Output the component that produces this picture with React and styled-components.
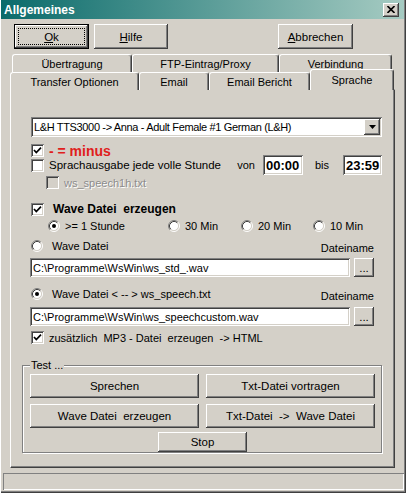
import React from "react";
import styled, { createGlobalStyle, css } from "styled-components";

const GlobalStyle = createGlobalStyle`
  html, body {
    margin: 0;
    padding: 0;
    background: #d4d0c8;
  }
  body {
    font-family: "Liberation Sans", Arial, sans-serif;
    font-size: 11px;
    color: #000;
  }
`;

//bevels
const raised = css`
  box-shadow: inset -1px -1px #404040, inset 1px 1px #fff, inset -2px -2px #808080, inset 2px 2px #d4d0c8;
`;
const sunken = css`
  box-shadow: inset 1px 1px #808080, inset -1px -1px #fff, inset 2px 2px #404040, inset -2px -2px #d4d0c8;
`;

const Window = styled.div`
  width: 406px;
  height: 493px;
  box-sizing: border-box;
  background: #d4d0c8;
  display: flex;
  flex-direction: column;
  overflow: hidden;
  box-shadow: inset 1px 0 #fff, inset -1px -1px #404040, inset -2px -2px #808080;
`;

const TitleBar = styled.div`
  height: 19px;
  margin: 0 2px 0 1px;
  padding: 0 5px 0 3px;
  background: linear-gradient(to right, #0a6b6b, #a6cbc2);
  display: flex;
  align-items: center;
  justify-content: space-between;
`;

const Title = styled.span`
  color: #fff;
  font-weight: bold;
  font-size: 12px;
`;

const CloseBox = styled.div`
  width: 16px;
  height: 14px;
  background: #d4d0c8;
  ${raised};
  display: flex;
  align-items: center;
  justify-content: center;
`;

const ButtonRow = styled.div`
  display: flex;
  margin-top: 5px;
  padding-left: 14px;
  height: 25px;
`;

const Button = styled.button`
  flex: none;
  width: ${p => p.$w}px;
  height: ${p => p.$h || 25}px;
  margin-left: ${p => p.$ml || 0}px;
  padding: 0;
  border: none;
  background: #d4d0c8;
  font: inherit;
  font-size: 11.5px;
  color: #000;
  white-space: pre;
  ${raised};
  ${p => p.$default && css`
    box-shadow: inset 0 0 0 1px #000, inset -2px -2px #404040, inset 2px 2px #fff, inset -3px -3px #808080;
    outline: 1px dotted #000;
    outline-offset: -5px;
  `}
  u {
    text-decoration: underline;
  }
`;

const TabRow = styled.div`
  display: flex;
  align-items: flex-start;
  height: ${p => p.$h}px;
  margin-top: ${p => p.$mt || 0}px;
  margin-left: ${p => p.$ml}px;
`;

const Tab = styled.div`
  flex: none;
  box-sizing: border-box;
  width: ${p => p.$w}px;
  height: ${p => (p.$active ? 21 : 18)}px;
  margin-top: ${p => (p.$active ? -3 : 0)}px;
  padding-top: ${p => (p.$active ? 0 : 1)}px;
  position: relative;
  z-index: ${p => (p.$active ? 2 : 0)};
  background: #d4d0c8;
  border-top: 1px solid #fff;
  border-left: 1px solid #fff;
  border-right: 1px solid #404040;
  border-top-left-radius: 3px;
  border-top-right-radius: 3px;
  box-shadow: inset -1px 0 #808080;
  display: flex;
  align-items: center;
  justify-content: center;
  font-size: 11px;
`;

const Panel = styled.div`
  margin-left: 10px;
  width: 385px;
  height: 379px;
  box-sizing: border-box;
  border-top: 1px solid #fff;
  border-left: 1px solid #fff;
  border-right: 1px solid #404040;
  border-bottom: 1px solid #404040;
  box-shadow: inset -1px -1px #808080;
  display: flex;
  flex-direction: column;
`;

const Combo = styled.div`
  margin: 27px 0 0 20px;
  width: 351px;
  height: 20px;
  box-sizing: border-box;
  padding: 2px;
  background: #fff;
  ${sunken};
  display: flex;
  align-items: center;
`;

const ComboText = styled.span`
  flex: 1;
  padding-left: 1px;
  white-space: nowrap;
  letter-spacing: -0.35px;
`;

const DropButton = styled.span`
  width: 16px;
  height: 16px;
  background: #d4d0c8;
  ${raised};
  display: flex;
  align-items: center;
  justify-content: center;
`;

const OptionRow = styled.div`
  display: flex;
  align-items: center;
  gap: ${p => p.$gap || 5}px;
  height: ${p => p.$h || 13}px;
  margin-top: ${p => p.$mt}px;
  margin-left: ${p => p.$ml}px;
  white-space: pre;
`;

const MinusLabel = styled.span`
  color: #e0201c;
  font-weight: bold;
  font-size: 14px;
`;

const BoldLabel = styled.span`
  font-weight: bold;
  font-size: 12px;
`;

const Disabled = styled.span`
  color: #8c8c8c;
  text-shadow: 1px 1px #fff;
`;

const TimeRow = styled.div`
  display: flex;
  align-items: center;
  height: 20px;
  width: 351px;
  margin: -2px 0 0 20px;
  white-space: nowrap;
`;

const TimeLabel = styled.span`
  flex: none;
  margin-left: ${p => p.$ml};
  margin-right: ${p => p.$mr}px;
  font-size: ${p => p.$size || 11}px;
`;

const Field = styled.div`
  flex: none;
  box-sizing: border-box;
  width: ${p => p.$w}px;
  height: ${p => p.$h}px;
  padding-left: 3px;
  background: #fff;
  ${sunken};
  display: flex;
  align-items: center;
  white-space: nowrap;
  overflow: hidden;
  font-size: ${p => (p.$bold ? 13 : 11)}px;
  font-weight: ${p => (p.$bold ? "bold" : "normal")};
`;

const RadioGrid = styled.div`
  display: grid;
  grid-template-columns: 120px 73px 72px auto;
  height: 13px;
  margin: 3px 0 0 37px;
`;

const FileHeader = styled.div`
  display: flex;
  justify-content: space-between;
  width: 343px;
  height: 16px;
  margin: ${p => p.$mt}px 0 0 20px;
`;

const RadioLabel = styled.span`
  align-self: flex-start;
  display: flex;
  align-items: center;
  gap: 9px;
  height: 13px;
  white-space: pre;
`;

const FileName = styled.span`
  align-self: flex-end;
  line-height: 13px;
`;

const FileRow = styled.div`
  display: flex;
  gap: 4px;
  margin: ${p => p.$mt}px 0 0 19px;
`;

const Group = styled.fieldset`
  margin: 15px 0 0 11px;
  width: 360px;
  height: 94px;
  box-sizing: border-box;
  padding: 3px 7px 0 7px;
  border: 1px solid #808080;
  box-shadow: inset 1px 1px #fff, 1px 1px #fff;
  min-inline-size: 0;
`;

const Legend = styled.legend`
  padding: 0 1px;
  line-height: 12px;
  background: #d4d0c8;
`;

const TestGrid = styled.div`
  display: grid;
  grid-template-columns: 169px 169px;
  grid-auto-rows: 24px;
  column-gap: 7px;
  row-gap: 6px;
  button {
    width: 100%;
    height: 100%;
  }
`;

const StopWrap = styled.div`
  display: flex;
  justify-content: center;
  margin-top: 4px;
  padding-left: 1px;
`;

const StatusBar = styled.div`
  margin: 5px 0 0 3px;
  width: 401px;
  height: 17px;
  box-shadow: inset 1px 1px #808080, inset -1px -1px #fff;
`;

const CheckBox = styled.span`
  flex: none;
  width: 13px;
  height: 13px;
  box-sizing: border-box;
  background: ${p => (p.$disabled ? "#d4d0c8" : "#fff")};
  ${sunken};
  display: flex;
  align-items: center;
  justify-content: center;
`;

const Check = ({ checked, disabled }) => (
  <CheckBox $disabled={disabled}>
    {checked && (
      <svg width="9" height="9" viewBox="0 0 9 9">
        <path d="M1 4 L3.3 6.6 L8 1.6" fill="none" stroke="#000" strokeWidth="1.7" />
      </svg>
    )}
  </CheckBox>
);

const Radio = ({ checked }) => (
  <svg width="12" height="12" viewBox="0 0 12 12" style={{ flex: "none" }}>
    <circle cx="6" cy="6" r="4.5" fill="#fff" />
    <path d="M2.11 9.89 A5.5 5.5 0 0 1 9.89 2.11" fill="none" stroke="#808080" />
    <path d="M9.89 2.11 A5.5 5.5 0 0 1 2.11 9.89" fill="none" stroke="#fff" />
    <path d="M2.82 9.18 A4.5 4.5 0 0 1 9.18 2.82" fill="none" stroke="#404040" />
    <path d="M9.18 2.82 A4.5 4.5 0 0 1 2.82 9.18" fill="none" stroke="#d4d0c8" />
    {checked && <circle cx="6" cy="6" r="2" fill="#000" />}
  </svg>
);

const RadioOption = ({ checked, children }) => (
  <OptionRow $mt={0} $ml={0} $gap={5}>
    <Radio checked={checked} />
    {children}
  </OptionRow>
);

const topTabs = [
  { label: "Übertragung", w: 120 },
  { label: "FTP-Eintrag/Proxy", w: 147 },
  { label: "Verbindung", w: 113 },
];

const bottomTabs = [
  { label: "Transfer Optionen", w: 129 },
  { label: "Email", w: 70 },
  { label: "Email Bericht", w: 101 },
  { label: "Sprache", w: 84, active: true },
];

const App = () => {
  return (
    <>
      <GlobalStyle />
      <Window>
        <TitleBar>
          <Title>Allgemeines</Title>
          <CloseBox>
            <svg width="8" height="7" viewBox="0 0 8 7">
              <path d="M0.5 0 L7.5 7 M7.5 0 L0.5 7" stroke="#000" strokeWidth="1.6" />
            </svg>
          </CloseBox>
        </TitleBar>

        <ButtonRow>
          <Button $w={75} $default><u>O</u>k</Button>
          <Button $w={74} $ml={5}><u>H</u>ilfe</Button>
          <Button $w={75} $ml={110}><u>A</u>bbrechen</Button>
        </ButtonRow>

        <TabRow $h={18} $mt={5} $ml={12}>
          {topTabs.map(t => (
            <Tab key={t.label} $w={t.w}>{t.label}</Tab>
          ))}
        </TabRow>
        <TabRow $h={17} $ml={10}>
          {bottomTabs.map(t => (
            <Tab key={t.label} $w={t.w} $active={t.active}>{t.label}</Tab>
          ))}
        </TabRow>

        <Panel>
          <Combo>
            <ComboText>L&amp;H TTS3000 -&gt; Anna - Adult Female #1 German (L&amp;H)</ComboText>
            <DropButton>
              <svg width="7" height="4" viewBox="0 0 7 4">
                <path d="M0 0 H7 L3.5 4 Z" fill="#000" />
              </svg>
            </DropButton>
          </Combo>

          <OptionRow $mt={7} $ml={20}>
            <Check checked />
            <MinusLabel>- = minus</MinusLabel>
          </OptionRow>

          <TimeRow>
            <Check />
            <TimeLabel $ml="5px" $mr={0} $size={11.5}>Sprachausgabe jede volle Stunde</TimeLabel>
            <TimeLabel $ml="auto" $mr={8}>von</TimeLabel>
            <Field $w={40} $h={20} $bold>00:00</Field>
            <TimeLabel $ml="12px" $mr={14}>bis</TimeLabel>
            <Field $w={39} $h={20} $bold>23:59</Field>
          </TimeRow>

          <OptionRow $mt={1} $ml={35}>
            <Check disabled />
            <Disabled>ws_speech1h.txt</Disabled>
          </OptionRow>

          <OptionRow $mt={13} $ml={20} $h={14} $gap={9}>
            <Check checked />
            <BoldLabel>Wave Datei  erzeugen</BoldLabel>
          </OptionRow>

          <RadioGrid>
            <RadioOption checked>&gt;= 1 Stunde</RadioOption>
            <RadioOption>30 Min</RadioOption>
            <RadioOption>20 Min</RadioOption>
            <RadioOption>10 Min</RadioOption>
          </RadioGrid>

          <FileHeader $mt={7}>
            <RadioLabel>
              <Radio />
              Wave Datei
            </RadioLabel>
            <FileName>Dateiname</FileName>
          </FileHeader>
          <FileRow $mt={3}>
            <Field $w={320} $h={19}>C:\Programme\WsWin\ws_std_.wav</Field>
            <Button $w={20} $h={19}>...</Button>
          </FileRow>

          <FileHeader $mt={10}>
            <RadioLabel>
              <Radio checked />
              Wave Datei &lt; -- &gt; ws_speech.txt
            </RadioLabel>
            <FileName>Dateiname</FileName>
          </FileHeader>
          <FileRow $mt={4}>
            <Field $w={320} $h={19}>C:\Programme\WsWin\ws_speechcustom.wav</Field>
            <Button $w={20} $h={19}>...</Button>
          </FileRow>

          <OptionRow $mt={5} $ml={20}>
            <Check checked />
            zusätzlich  MP3 - Datei  erzeugen  -&gt; HTML
          </OptionRow>

          <Group>
            <Legend>Test ...</Legend>
            <TestGrid>
              <Button>Sprechen</Button>
              <Button>Txt-Datei vortragen</Button>
              <Button>Wave Datei  erzeugen</Button>
              <Button>Txt-Datei  -&gt;  Wave Datei</Button>
            </TestGrid>
            <StopWrap>
              <Button $w={89} $h={20}>Stop</Button>
            </StopWrap>
          </Group>
        </Panel>

        <StatusBar />
      </Window>
    </>
  );
};

export default App;
